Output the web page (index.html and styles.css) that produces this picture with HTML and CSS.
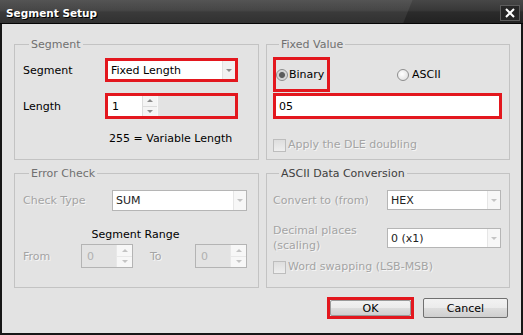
FILE: index.html
```html
<!DOCTYPE html>
<html lang="en">
<head>
<meta charset="UTF-8">
<title>Segment Setup</title>
<link rel="stylesheet" href="styles.css">
</head>
<body>
<div class="window">
    <!-- title bar -->
    <div class="titlebar">
        <span class="title">Segment Setup</span>
        <span class="close">
            <svg width="12" height="10" viewBox="0 0 12 10"><path d="M2 1 L10 9 M10 1 L2 9" stroke="#fff" stroke-width="2"/></svg>
        </span>
    </div>

    <div class="dialog">
        <div class="groups">
            <!-- Segment -->
            <fieldset class="group seg">
                <legend>Segment</legend>
                <div class="row">
                    <span class="lbl w82">Segment</span>
                    <div class="hl seg-hl">
                        <div class="combo"><span class="val">Fixed Length</span><span class="drop"><i class="tri-down"></i></span></div>
                    </div>
                </div>
                <div class="row len-row">
                    <span class="lbl w82">Length</span>
                    <div class="hl len-hl">
                        <div class="spin len-spin">
                            <span class="val">1</span>
                            <span class="arrows"><span><i class="tri-up"></i></span><span><i class="tri-down"></i></span></span>
                        </div>
                    </div>
                </div>
                <div class="note">255 = Variable Length</div>
            </fieldset>

            <!-- Fixed Value -->
            <fieldset class="group fixed">
                <legend>Fixed Value</legend>
                <div class="radios">
                    <div class="hl radio-hl"><span class="radio on"></span>Binary</div>
                    <div class="radio-item"><span class="radio"></span>ASCII</div>
                </div>
                <div class="hl text-hl"><div class="textbox">05</div></div>
                <div class="check dle"><span class="box"></span>Apply the DLE doubling</div>
            </fieldset>

            <!-- Error Check -->
            <fieldset class="group err">
                <legend>Error Check</legend>
                <div class="row">
                    <span class="lbl dis w89">Check Type</span>
                    <div class="combo dcombo chk-combo"><span class="val">SUM</span><span class="drop"><i class="tri-down"></i></span></div>
                </div>
                <div class="range">Segment Range</div>
                <div class="row from-row">
                    <span class="lbl dis w58">From</span>
                    <div class="spin dspin">
                        <span class="val">0</span>
                        <span class="arrows"><span><i class="tri-up"></i></span><span><i class="tri-down"></i></span></span>
                    </div>
                    <span class="lbl dis to">To</span>
                    <div class="spin dspin">
                        <span class="val">0</span>
                        <span class="arrows"><span><i class="tri-up"></i></span><span><i class="tri-down"></i></span></span>
                    </div>
                </div>
            </fieldset>

            <!-- ASCII Data Conversion -->
            <fieldset class="group conv">
                <legend>ASCII Data Conversion</legend>
                <div class="row">
                    <span class="lbl dis w114">Convert to (from)</span>
                    <div class="combo dcombo conv-combo"><span class="val">HEX</span><span class="drop"><i class="tri-down"></i></span></div>
                </div>
                <div class="row dec-row">
                    <span class="lbl dis w114 two">Decimal places<br>(scaling)</span>
                    <div class="combo dcombo conv-combo"><span class="val">0 (x1)</span><span class="drop"><i class="tri-down"></i></span></div>
                </div>
                <div class="check swap"><span class="box"></span>Word swapping (LSB-MSB)</div>
            </fieldset>
        </div>

        <div class="buttons">
            <div class="hl ok-hl"><button class="btn">OK</button></div>
            <button class="btn cancel">Cancel</button>
        </div>
    </div>
</div>
</body>
</html>
```

FILE: styles.css
```css
/* page */
* {
    box-sizing: border-box;
}
body {
    margin: 0;
    font-family: "DejaVu Sans", Tahoma, sans-serif;
    font-size: 11px;
    color: #000;
    background: #171717;
}

.window {
    width: 523px;
    height: 335px;
    display: flex;
    flex-direction: column;
    background: #171717;
}

/* title bar */
.titlebar {
    height: 24px;
    flex: none;
    display: flex;
    align-items: center;
    justify-content: space-between;
    padding: 3px 3px 0 6px;
    border-bottom: 1px solid #050505;
    background:
        linear-gradient(112deg, rgba(255, 255, 255, 0.07) 0 382px, transparent 383px),
        linear-gradient(to bottom, #474747, #383838 45%, #2b2b2b 52%, #222 100%);
}
.title {
    color: #fff;
    font-weight: bold;
    font-size: 10.5px;
    text-shadow: 1px 1px 0 #000;
}
.close {
    width: 20px;
    height: 16px;
    border: 1px solid #5c5c5c;
    background: #262626;
    display: flex;
    align-items: center;
    justify-content: center;
}

/* dialog body */
.dialog {
    flex: 1;
    margin: 0 2px 2px;
    background: #e3e3e3;
    padding: 14px 11px 0 12px;
}
.groups {
    display: grid;
    grid-template-columns: 245px 244px;
    grid-template-rows: 122px 121px;
    gap: 7px;
}
fieldset.group {
    margin: 0;
    min-width: 0;
    border: 1px solid #c3c3c3;
    padding: 7px 19px 0 8px;
}
legend {
    margin-left: 6px;
    padding: 0 2px;
    line-height: 13px;
    color: #707070;
}
.conv legend {
    color: #404040;
}

.row {
    display: flex;
    align-items: center;
}
.row > * {
    flex: none;
}
.lbl.dis,
.check {
    color: #a4a4a4;
    text-shadow: 1px 1px 0 rgba(255, 255, 255, 0.7);
}
.w82 { width: 82px; }
.w89 { width: 89px; }
.w58 { width: 58px; }
.w114 { width: 114px; }

/* red highlight boxes */
.hl {
    border: 3px solid #e3171e;
    flex: none;
}

/* combo box */
.combo {
    display: flex;
    height: 100%;
    background: #fff;
}
.combo .val {
    flex: 1;
    padding-left: 3px;
    display: flex;
    align-items: center;
    white-space: nowrap;
}
.combo .drop {
    width: 13px;
    display: flex;
    align-items: center;
    justify-content: center;
    background: #f1f1f1;
    border-left: 1px solid #e2e2e2;
}
.tri-down, .tri-up {
    display: block;
    width: 0;
    height: 0;
    border-left: 3px solid transparent;
    border-right: 3px solid transparent;
}
.tri-down {
    border-top: 3px solid #8c8c8c;
}
.tri-up {
    border-bottom: 3px solid #8c8c8c;
}

.seg-hl {
    width: 133px;
    height: 24px;
}
.len-row {
    margin-top: 11px;
}
.len-hl {
    width: 133px;
    height: 26px;
}

/* spin box */
.spin {
    display: flex;
    height: 100%;
}
.spin .val {
    display: flex;
    align-items: center;
    padding-left: 4px;
}
.spin .arrows {
    width: 16px;
    display: flex;
    flex-direction: column;
}
.spin .arrows span {
    flex: 1;
    display: flex;
    align-items: center;
    justify-content: center;
    background: #f4f4f4;
    border-left: 1px solid #dcdcdc;
}
.spin .arrows span + span {
    border-top: 1px solid #dcdcdc;
}
.len-spin .val {
    width: 34px;
    background: #fff;
}
.len-spin .arrows {
    border-right: 1px solid #f8f8f8;
}

.note {
    margin-top: 13px;
    padding-left: 86px;
    line-height: 14px;
}

/* Error check */
fieldset.err {
    padding: 10px 10px 0 8px;
}
.dcombo {
    border: 1px solid #b5b5b5;
}
.dcombo .val {
    color: #222;
}
.dcombo .drop {
    background: #f7f7f7;
    border-left-color: #e6e6e6;
}
.dcombo .tri-down {
    border-top-color: #c4c4c4;
}
.chk-combo {
    width: 135px;
    height: 21px;
}
.range {
    margin-top: 17px;
    line-height: 14px;
    text-align: center;
}
.from-row {
    margin-top: 2px;
}
.dspin {
    width: 52px;
    height: 24px;
    border: 1px solid #b4b4b4;
    justify-content: space-between;
}
.dspin .val {
    color: #b0b0b0;
    padding-left: 5px;
}
.dspin .arrows span {
    background: #f7f7f7;
    border-left-color: #e8e8e8;
}
.dspin .arrows span + span {
    border-top-color: #e8e8e8;
}
.dspin .tri-up {
    border-bottom-color: #c4c4c4;
}
.dspin .tri-down {
    border-top-color: #c4c4c4;
}
.to {
    margin-left: 17px;
    width: 45px;
}

/* Fixed value */
fieldset.fixed {
    padding: 6px 7px 0 6px;
}
.radios {
    display: flex;
    align-items: center;
}
.radio-hl {
    width: 57px;
    height: 35px;
    display: flex;
    align-items: center;
}
.radio-item {
    margin-left: 67px;
    display: flex;
    align-items: center;
}
.radio {
    width: 12px;
    height: 12px;
    border-radius: 50%;
    border: 1px solid #8e8e8e;
    background: radial-gradient(circle at 40% 40%, #fff, #dadada);
    margin-right: 3px;
}
.radio-hl .radio {
    margin-right: 1px;
}
.radio.on {
    background: radial-gradient(circle, #5b5b5b 0 2.5px, #cfcfcf 3.5px, #eee);
}
.text-hl {
    margin-top: 1px;
    width: 229px;
    height: 26px;
}
.textbox {
    height: 100%;
    background: #fff;
    padding-left: 3px;
    display: flex;
    align-items: center;
}
.check {
    display: flex;
    align-items: center;
    line-height: 14px;
}
.check .box {
    width: 13px;
    height: 13px;
    margin-right: 2px;
    border: 1px solid #bdbdbd;
    background: linear-gradient(#dedede, #eeeeee);
}
.dle {
    margin-top: 19px;
}

/* ASCII data conversion */
fieldset.conv {
    padding: 10px 8px 0 6px;
}
.conv-combo {
    width: 114px;
    height: 20px;
}
.dec-row {
    margin-top: 13px;
}
.two {
    line-height: 15px;
}
.swap {
    margin-top: 7px;
}

/* buttons */
.buttons {
    margin-top: 9px;
    padding-right: 2px;
    display: flex;
    justify-content: flex-end;
    align-items: center;
    gap: 9px;
}
.ok-hl {
    width: 87px;
    height: 22px;
}
.btn {
    display: block;
    width: 100%;
    height: 100%;
    margin: 0;
    padding: 0;
    font-family: inherit;
    font-size: 11px;
    color: #000;
    border: 1px solid #707070;
    border-radius: 2px;
    background: linear-gradient(#f2f2f2 0, #ebebeb 50%, #dddddd 51%, #cfcfcf 100%);
}
.ok-hl .btn {
    border-color: #9a9a9a;
}
.cancel {
    width: 85px;
    height: 20px;
}
```
